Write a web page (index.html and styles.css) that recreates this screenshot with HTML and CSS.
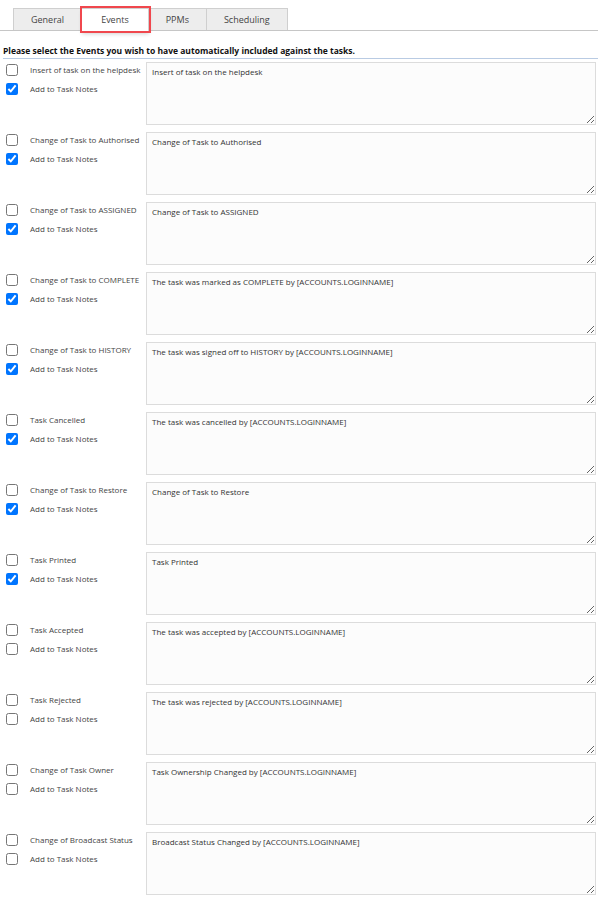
FILE: index.html
```html
<!DOCTYPE html>
<html>
<head>
<meta charset="utf-8">
<link rel="stylesheet" href="styles.css">
</head>
<body>
<div class="tabs">
  <div class="tab">General</div>
  <div class="tab active">Events</div>
  <div class="tab">PPMs</div>
  <div class="tab">Scheduling</div>
</div>
<div class="heading">Please select the Events you wish to have automatically included against the tasks.</div>
<div class="rows">
  <div class="row">
    <div class="opts">
      <label class="opt"><input type="checkbox"><span>Insert of task on the helpdesk</span></label>
      <label class="opt"><input type="checkbox" checked><span>Add to Task Notes</span></label>
    </div>
    <textarea>Insert of task on the helpdesk</textarea>
  </div>
  <div class="row">
    <div class="opts">
      <label class="opt"><input type="checkbox"><span>Change of Task to Authorised</span></label>
      <label class="opt"><input type="checkbox" checked><span>Add to Task Notes</span></label>
    </div>
    <textarea>Change of Task to Authorised</textarea>
  </div>
  <div class="row">
    <div class="opts">
      <label class="opt"><input type="checkbox"><span>Change of Task to ASSIGNED</span></label>
      <label class="opt"><input type="checkbox" checked><span>Add to Task Notes</span></label>
    </div>
    <textarea>Change of Task to ASSIGNED</textarea>
  </div>
  <div class="row">
    <div class="opts">
      <label class="opt"><input type="checkbox"><span>Change of Task to COMPLETE</span></label>
      <label class="opt"><input type="checkbox" checked><span>Add to Task Notes</span></label>
    </div>
    <textarea>The task was marked as COMPLETE by [ACCOUNTS.LOGINNAME]</textarea>
  </div>
  <div class="row">
    <div class="opts">
      <label class="opt"><input type="checkbox"><span>Change of Task to HISTORY</span></label>
      <label class="opt"><input type="checkbox" checked><span>Add to Task Notes</span></label>
    </div>
    <textarea>The task was signed off to HISTORY by [ACCOUNTS.LOGINNAME]</textarea>
  </div>
  <div class="row">
    <div class="opts">
      <label class="opt"><input type="checkbox"><span>Task Cancelled</span></label>
      <label class="opt"><input type="checkbox" checked><span>Add to Task Notes</span></label>
    </div>
    <textarea>The task was cancelled by [ACCOUNTS.LOGINNAME]</textarea>
  </div>
  <div class="row">
    <div class="opts">
      <label class="opt"><input type="checkbox"><span>Change of Task to Restore</span></label>
      <label class="opt"><input type="checkbox" checked><span>Add to Task Notes</span></label>
    </div>
    <textarea>Change of Task to Restore</textarea>
  </div>
  <div class="row">
    <div class="opts">
      <label class="opt"><input type="checkbox"><span>Task Printed</span></label>
      <label class="opt"><input type="checkbox" checked><span>Add to Task Notes</span></label>
    </div>
    <textarea>Task Printed</textarea>
  </div>
  <div class="row">
    <div class="opts">
      <label class="opt"><input type="checkbox"><span>Task Accepted</span></label>
      <label class="opt"><input type="checkbox"><span>Add to Task Notes</span></label>
    </div>
    <textarea>The task was accepted by [ACCOUNTS.LOGINNAME]</textarea>
  </div>
  <div class="row">
    <div class="opts">
      <label class="opt"><input type="checkbox"><span>Task Rejected</span></label>
      <label class="opt"><input type="checkbox"><span>Add to Task Notes</span></label>
    </div>
    <textarea>The task was rejected by [ACCOUNTS.LOGINNAME]</textarea>
  </div>
  <div class="row">
    <div class="opts">
      <label class="opt"><input type="checkbox"><span>Change of Task Owner</span></label>
      <label class="opt"><input type="checkbox"><span>Add to Task Notes</span></label>
    </div>
    <textarea>Task Ownership Changed by [ACCOUNTS.LOGINNAME]</textarea>
  </div>
  <div class="row">
    <div class="opts">
      <label class="opt"><input type="checkbox"><span>Change of Broadcast Status</span></label>
      <label class="opt"><input type="checkbox"><span>Add to Task Notes</span></label>
    </div>
    <textarea>Broadcast Status Changed by [ACCOUNTS.LOGINNAME]</textarea>
  </div>
</div>
</body>
</html>
```
FILE: styles.css
```css
html, body {
  margin: 0;
  padding: 0;
  background: #fff;
}
body {
  font-family: "Open Sans", "Liberation Sans", sans-serif;
  font-size: 8px;
  color: #333;
  width: 600px;
}
.tabs {
  display: flex;
  padding: 8px 0 0 13px;
  margin-right: 2px;
  border-bottom: 1px solid #c6c6c6;
  height: 22px;
}
.tab {
  height: 21px;
  line-height: 21px;
  padding: 0 17px;
  background: #ededed;
  border: 1px solid #cfcfcf;
  border-bottom: none;
  border-left: none;
  color: #444;
  font-size: 9px;
}
.tab:first-child {
  border-left: 1px solid #cfcfcf;
}
.tab.active {
  background: #fff;
  height: 22px;
  margin-bottom: -1px;
  outline: 2px solid #f0474d;
  box-shadow: 0 3px 4px rgba(0,0,0,0.18);
  padding: 0 19px;
  position: relative;
}
.heading {
  margin: 14px 2px 0 3px;
  padding-bottom: 2px;
  border-bottom: 1px solid #b9cbe3;
  font-weight: bold;
  color: #111;
  font-size: 8.5px;
  line-height: 11px;
  white-space: nowrap;
}
.rows {
  display: flex;
  flex-direction: column;
  gap: 7px;
  padding: 3px 4px 0 0;
}
.row {
  display: flex;
  height: 63px;
}
.opts {
  width: 146px;
  flex: none;
  display: flex;
  flex-direction: column;
  gap: 6px;
  padding-top: 1px;
}
.opt {
  display: flex;
  align-items: center;
  height: 13px;
  white-space: nowrap;
}
.opt input {
  margin: 0 0 0 6px;
  width: 12px;
  height: 12px;
  flex: none;
}
.opt span {
  margin-left: 12px;
  color: #444;
}
textarea {
  flex: 1;
  height: 63px;
  box-sizing: border-box;
  margin: 0;
  border: 1px solid #dcdcdc;
  background: #fcfcfc;
  font-family: "Open Sans", "Liberation Sans", sans-serif;
  font-size: 8px;
  color: #333;
  padding: 3px 5px;
  resize: vertical;
  outline: none;
}
```
